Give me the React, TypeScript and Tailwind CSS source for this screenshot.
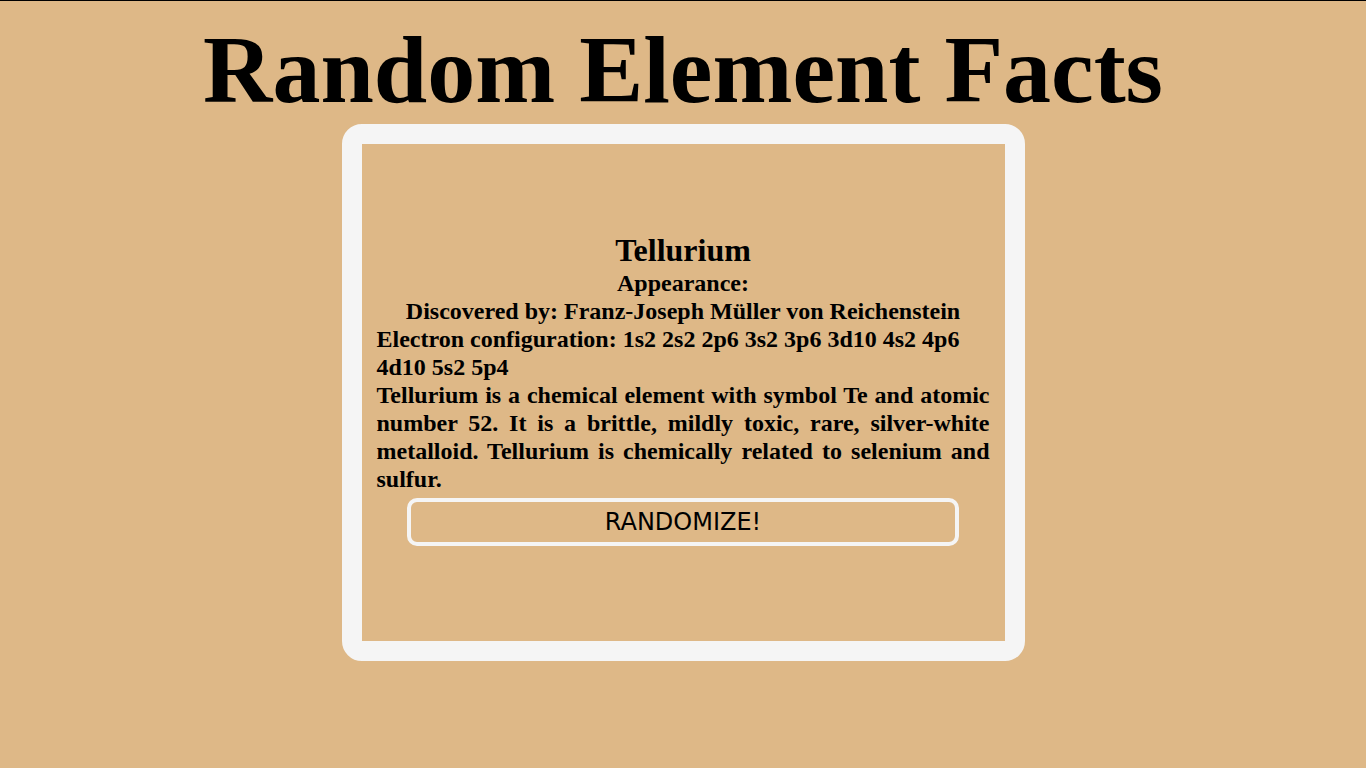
import React from 'react';

const element = {
  name: 'Tellurium',
  appearance: '',
  discoveredBy: 'Franz-Joseph Müller von Reichenstein',
  config: '1s2 2s2 2p6 3s2 3p6 3d10 4s2 4p6 4d10 5s2 5p4',
  summary:
    'Tellurium is a chemical element with symbol Te and atomic number 52. It is a brittle, mildly toxic, rare, silver-white metalloid. Tellurium is chemically related to selenium and sulfur.'
};

export default function App() {
  return (
    <div className="min-h-[768px] bg-[#deb887] border-t border-black text-black font-['Liberation_Serif',serif]">
      <h1 className="mt-4 text-center text-[96px] font-bold leading-[106px]">Random Element Facts</h1>
      <div className="mx-auto mt-px w-[683px] h-[537px] border-[20px] border-[#f5f5f5] rounded-[20px]">
        <div className="flex h-full flex-col pt-[88px] px-[15px] text-[24px] font-bold leading-[28px]">
          <h2 className="text-center text-[32px] leading-[37px]">{element.name}</h2>
          <p className="text-center">Appearance: {element.appearance}</p>
          <p className="text-center">Discovered by: {element.discoveredBy}</p>
          <p>Electron configuration: {element.config}</p>
          <p className="text-justify">{element.summary}</p>
          <button
            type="button"
            className="mx-auto mt-[5px] w-[90%] h-[48px] shrink-0 border-4 border-[#f5f5f5] rounded-[10px] font-['DejaVu_Sans',sans-serif] font-normal text-[24px]"
          >
            RANDOMIZE!
          </button>
        </div>
      </div>
    </div>
  );
}
